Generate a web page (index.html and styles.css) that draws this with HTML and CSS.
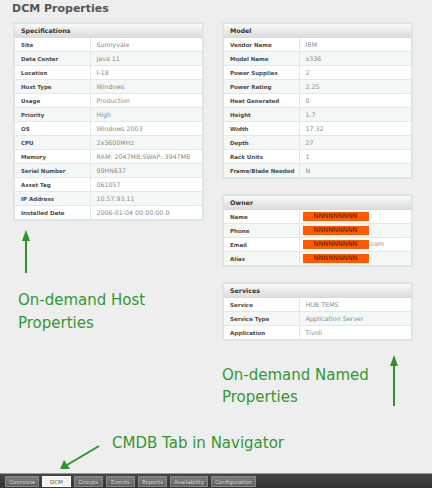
FILE: index.html
```html
<!DOCTYPE html>
<html>
<head>
<meta charset="utf-8">
<link rel="stylesheet" href="styles.css">
</head>
<body>
<div class="page">
  <h1 class="title">DCM Properties</h1>
  <div class="columns">
    <div class="col">
      <table class="props">
        <colgroup><col class="kcol"><col></colgroup>
        <tr class="head"><th colspan="2">Specifications</th></tr>
        <tr><td class="k">Site</td><td class="v">Sunnyvale</td></tr>
        <tr><td class="k">Data Center</td><td class="v">Java 11</td></tr>
        <tr><td class="k">Location</td><td class="v">I-18</td></tr>
        <tr><td class="k">Host Type</td><td class="v">Windows</td></tr>
        <tr><td class="k">Usage</td><td class="v">Production</td></tr>
        <tr><td class="k">Priority</td><td class="v">High</td></tr>
        <tr><td class="k">OS</td><td class="v">Windows 2003</td></tr>
        <tr><td class="k">CPU</td><td class="v">2x3600MHz</td></tr>
        <tr><td class="k">Memory</td><td class="v">RAM: 2047MB;SWAP: 3947MB</td></tr>
        <tr><td class="k">Serial Number</td><td class="v">99HN637</td></tr>
        <tr><td class="k">Asset Tag</td><td class="v">061057</td></tr>
        <tr><td class="k">IP Address</td><td class="v">10.57.93.11</td></tr>
        <tr><td class="k">Installed Date</td><td class="v">2006-01-04 00:00:00.0</td></tr>
      </table>
      <svg class="arrow-up-left" width="20" height="44" viewBox="0 0 20 44">
        <line x1="10" y1="8" x2="10" y2="43" stroke="#2a962a" stroke-width="2"/>
        <polygon points="10,0 6,11 14,11" fill="#2a962a"/>
      </svg>
      <div class="note note-left">On-demand Host<br>Properties</div>
    </div>
    <div class="col">
      <table class="props">
        <colgroup><col class="kcol"><col></colgroup>
        <tr class="head"><th colspan="2">Model</th></tr>
        <tr><td class="k">Vendor Name</td><td class="v">IBM</td></tr>
        <tr><td class="k">Model Name</td><td class="v">x336</td></tr>
        <tr><td class="k">Power Supplies</td><td class="v">2</td></tr>
        <tr><td class="k">Power Rating</td><td class="v">2.25</td></tr>
        <tr><td class="k">Heat Generated</td><td class="v">0</td></tr>
        <tr><td class="k">Height</td><td class="v">1.7</td></tr>
        <tr><td class="k">Width</td><td class="v">17.32</td></tr>
        <tr><td class="k">Depth</td><td class="v">27</td></tr>
        <tr><td class="k">Rack Units</td><td class="v">1</td></tr>
        <tr><td class="k">Frame/Blade Needed</td><td class="v">N</td></tr>
      </table>
      <table class="props gap">
        <colgroup><col class="kcol"><col></colgroup>
        <tr class="head"><th colspan="2">Owner</th></tr>
        <tr><td class="k">Name</td><td class="v"><span class="redact">NNNNNNNNN</span></td></tr>
        <tr><td class="k">Phone</td><td class="v"><span class="redact">NNNNNNNNN</span></td></tr>
        <tr><td class="k">Email</td><td class="v"><span class="redact">NNNNNNNNN</span>.com</td></tr>
        <tr><td class="k">Alias</td><td class="v"><span class="redact">NNNNNNNNN</span></td></tr>
      </table>
      <table class="props gap">
        <colgroup><col class="kcol"><col></colgroup>
        <tr class="head"><th colspan="2">Services</th></tr>
        <tr><td class="k">Service</td><td class="v">HUB TEMS</td></tr>
        <tr><td class="k">Service Type</td><td class="v">Application Server</td></tr>
        <tr><td class="k">Application</td><td class="v">Tivoli</td></tr>
      </table>
      <div class="note-row">
        <div class="note note-right">On-demand Named<br>Properties</div>
        <svg class="arrow-up-right" width="20" height="52" viewBox="0 0 20 52">
          <line x1="10" y1="8" x2="10" y2="51" stroke="#2a962a" stroke-width="2"/>
          <polygon points="10,0 6,11 14,11" fill="#2a962a"/>
        </svg>
      </div>
    </div>
  </div>
</div>
<div class="bottom-note">
  <svg class="arrow-diag" width="50" height="41" viewBox="0 0 50 41">
    <line x1="44" y1="14" x2="12" y2="33" stroke="#2a962a" stroke-width="2"/>
    <polygon points="5,37 9,28 15,37" fill="#2a962a"/>
  </svg>
  <div class="note">CMDB Tab in Navigator</div>
</div>
<div class="tabbar">
  <span class="tab">Overview</span>
  <span class="tab active">DCM</span>
  <span class="tab">Groups</span>
  <span class="tab">Events</span>
  <span class="tab">Reports</span>
  <span class="tab">Availability</span>
  <span class="tab">Configuration</span>
</div>
</body>
</html>
```

FILE: styles.css
```css
html, body {
  margin: 0;
  padding: 0;
}
body {
  width: 432px;
  height: 488px;
  background: #eeeeee;
  font-family: "DejaVu Sans", Verdana, sans-serif;
  display: flex;
  flex-direction: column;
  overflow: hidden;
}
.page {
  padding: 2px 0 0 13px;
}
.title {
  margin: 0 0 6px -1px;
  font-size: 11px;
  line-height: 14px;
  font-weight: bold;
  color: #555;
}
.columns {
  display: flex;
  gap: 18px;
}
.col {
  width: 191px;
  display: flex;
  flex-direction: column;
}
.props {
  width: 191px;
  border-collapse: collapse;
  border: 2px solid #dbe7e4;
  background: #fff;
  table-layout: fixed;
}
.props .kcol {
  width: 76px;
}
.props.gap {
  margin-top: 15px;
}
.props th {
  height: 13px;
  padding: 0 0 0 6px;
  text-align: left;
  font-size: 6.3px;
  font-weight: bold;
  color: #333;
  background: linear-gradient(#fafafa, #dcdcdc);
  border-bottom: 1px solid #d3dedb;
}
.props td {
  height: 13px;
  padding: 0;
  border: 1px solid #dfeae7;
  white-space: nowrap;
  overflow: visible;
}
.props tr:nth-child(odd) td {
  background: #f3f8f7;
}
.props td.k {
  padding-left: 6px;
  font-size: 5.5px;
  font-weight: bold;
  color: #4a4a4a;
}
.props td.v {
  padding-left: 6px;
  font-size: 6.3px;
  color: #8a8a8a;
}
.redact {
  display: inline-block;
  width: 66px;
  height: 9px;
  line-height: 9px;
  margin-left: -3px;
  background: #ff5a00;
  color: #3a1a00;
  font-size: 6.5px;
  text-align: center;
  vertical-align: middle;
}
.note {
  font-size: 15px;
  line-height: 23px;
  color: #2f9a2f;
}
.arrow-up-left {
  display: block;
  margin: 9px 0 0 3px;
}
.note-left {
  margin: 15px 0 0 5px;
}
.note-row {
  display: flex;
  margin-top: 14px;
  justify-content: space-between;
}
.note-right {
  margin-top: 9px;
  line-height: 22px;
}
.arrow-up-right {
  display: block;
  margin-right: 9px;
}
.bottom-note {
  margin-top: auto;
  display: flex;
  padding-left: 55px;
  height: 41px;
}
.bottom-note .note {
  margin-left: 7px;
  line-height: 22px;
}
.tabbar {
  height: 14px;
  border-top: 1px solid #9a9a9a;
  background: linear-gradient(#454545, #333);
  display: flex;
  align-items: center;
  gap: 3px;
  padding-left: 5px;
}
.tab {
  min-width: 29px;
  height: 11px;
  line-height: 11px;
  padding: 0 3px;
  box-sizing: border-box;
  text-align: center;
  font-size: 5.5px;
  color: #d0d0d0;
  background: linear-gradient(#7c7c7c, #626262);
  border: 1px solid #888;
}
.tab.active {
  background: #f2f2f2;
  color: #555;
  border-color: #fff;
}
```
